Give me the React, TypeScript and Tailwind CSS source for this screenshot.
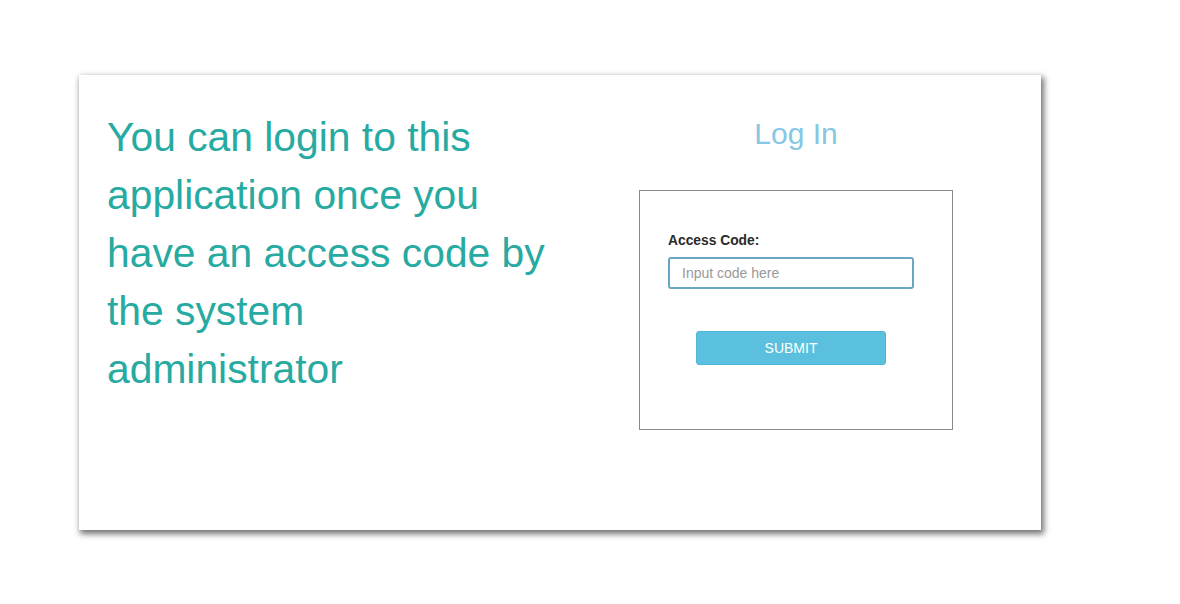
export default function App() {
  return (
    <div className="w-[1180px] h-[604px] bg-white pt-[75px] pl-[79px] font-['Liberation_Sans',Arial,sans-serif]">
      <div className="flex w-[962px] h-[455px] bg-white shadow-[2px_3px_6px_1px_rgba(0,0,0,0.55)]">
        <div className="w-[486px] pl-[28px] pt-[33px]">
          <p className="text-[40.8px] leading-[58px] text-[#27aaa1] w-[441px]">
            You can login to this application once you have an access code by the system administrator
          </p>
        </div>
        <div className="flex-1 flex flex-col items-center pt-[39px] pr-[14px]">
          <h1 className="text-[30px] leading-[40px] text-[#86c7e5]">Log In</h1>
          <div className="mt-[36px] w-[314px] h-[240px] border border-[#8a8a8a] pt-[42px] px-[28px]">
            <label className="block text-[13.8px] leading-[16px] font-bold text-[#2a2a2a]">Access Code:</label>
            <input
              className="mt-[8px] w-[246px] h-[32px] rounded-[3px] border-2 border-[#6aa6c4] px-[12px] text-[14px] outline-none placeholder:text-[#999]"
              placeholder="Input code here"
            />
            <div className="flex pl-[28px] mt-[42px]">
              <button className="w-[190px] h-[34px] rounded-[3px] bg-[#5bc0de] border border-[#50b5d3] text-white text-[14px]">
                SUBMIT
              </button>
            </div>
          </div>
        </div>
      </div>
    </div>
  )
}
